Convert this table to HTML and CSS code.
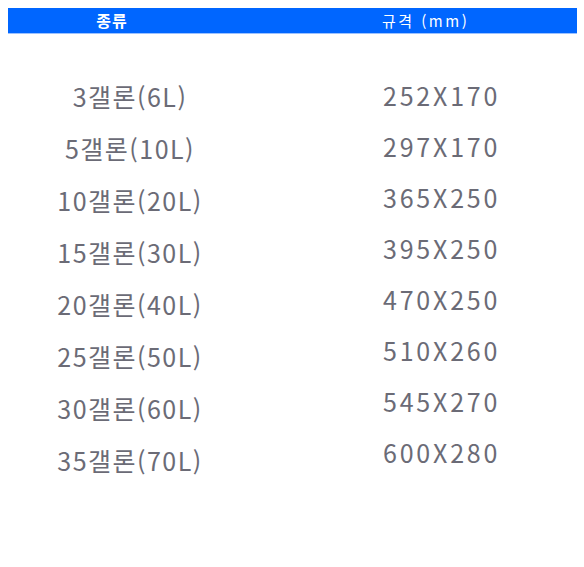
FILE: index.html
```html
<!DOCTYPE html>
<html lang="ko">
<head>
<meta charset="utf-8">
<link rel="stylesheet" href="styles.css">
</head>
<body>
<div class="head">
  <div class="h1">종류</div>
  <div class="h2">규격 (mm)</div>
</div>
<div class="cols">
  <div class="col col-type">
    <div class="cell">3갤론(6L)</div>
    <div class="cell">5갤론(10L)</div>
    <div class="cell">10갤론(20L)</div>
    <div class="cell">15갤론(30L)</div>
    <div class="cell">20갤론(40L)</div>
    <div class="cell">25갤론(50L)</div>
    <div class="cell">30갤론(60L)</div>
    <div class="cell">35갤론(70L)</div>
  </div>
  <div class="col col-size">
    <div class="cell">252X170</div>
    <div class="cell">297X170</div>
    <div class="cell">365X250</div>
    <div class="cell">395X250</div>
    <div class="cell">470X250</div>
    <div class="cell">510X260</div>
    <div class="cell">545X270</div>
    <div class="cell">600X280</div>
  </div>
</div>
</body>
</html>
```
FILE: styles.css
```css
html, body {
  margin: 0;
  padding: 0;
  background: #ffffff;
  font-family: "Noto Sans CJK KR", "Noto Sans", sans-serif;
}
.head {
  margin: 8px 7px 0 8px;
  height: 25px;
  background: #0066ff;
  border-bottom: 1px solid #9cc2ff;
  display: flex;
  align-items: center;
  color: #ffffff;
  font-size: 16px;
  line-height: 25px;
}
.h1 {
  width: 208px;
  text-align: center;
  font-weight: bold;
  letter-spacing: 1px;
}
.h2 {
  padding-left: 166px;
  font-size: 15px;
  letter-spacing: 2.5px;
}
.cols {
  margin-top: 46px;
  display: flex;
  align-items: flex-start;
  color: #6b6b76;
  font-size: 25px;
  line-height: 30px;
}
.col {
  display: flex;
  flex-direction: column;
}
.col-type {
  width: 260px;
  text-align: center;
  letter-spacing: 1.5px;
  padding-top: 1px;
  gap: 22px;
}
.col-size {
  padding-left: 123px;
  letter-spacing: 2.8px;
  gap: 21px;
}
.cell {
  height: 30px;
}
```
